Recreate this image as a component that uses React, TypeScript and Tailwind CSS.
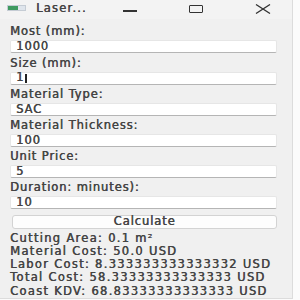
import React from 'react';

const fields = [
  { label: 'Most (mm):', value: '1000' },
  { label: 'Size (mm):', value: '1', caret: true },
  { label: 'Material Type:', value: 'SAC' },
  { label: 'Material Thickness:', value: '100' },
  { label: 'Unit Price:', value: '5' },
  { label: 'Duration: minutes):', value: '10' },
];

const results = [
  'Cutting Area: 0.1 m²',
  'Material Cost: 50.0 USD',
  'Labor Cost: 8.333333333333332 USD',
  'Total Cost: 58.33333333333333 USD',
  'Coast KDV: 68.83333333333333 USD',
];

const App = () => {
  return (
    <div className="w-[300px] h-[300px] bg-[#fbfbfb] flex overflow-hidden font-['DejaVu_Sans',sans-serif] text-[#444] [text-shadow:0.45px_0_0_#444]">
      <div className="w-[293px] h-[299px] bg-[#f0f0f0] border-r border-b border-[#dcdcdc] flex flex-col">
        {/* title bar */}
        <div className="h-[20px] flex items-center bg-[#f3f3f3] relative">
          <div className="ml-[7px] mt-[-4px] w-[19px] h-[6px] flex border border-[#c5ccd4]">
            <div className="w-[10px] bg-[#3f9a5f]" />
            <div className="flex-1 bg-[#dfe5ec]" />
          </div>
          <span className="ml-[10px] mt-[-3px] text-[11.5px] tracking-[1.2px]">Laser...</span>
          <div className="absolute left-[123px] top-[10px] w-[14px] h-[1.5px] bg-[#333]" />
          <div className="absolute left-[189px] top-[5px] w-[14px] h-[8px] border-[1.5px] border-[#333] rounded-[1px]" />
          <svg className="absolute left-[255px] top-[4px]" width="16" height="10" viewBox="0 0 16 10">
            <path d="M1 0.5 L15 9.5 M15 0.5 L1 9.5" stroke="#333" strokeWidth="1.3" fill="none" />
          </svg>
        </div>

        {/* form */}
        <div className="pl-[10px] pt-[6px] flex flex-col">
          {fields.map((f) => (
            <div key={f.label} className="flex flex-col mb-[3.2px]">
              <div className="h-[12px] leading-[12px] text-[11.5px] tracking-[0.9px]">{f.label}</div>
              <div className="mt-[3px] w-[267px] h-[13px] bg-white border border-[#e6e6e6] border-b-[#b5b5b5] rounded-[2px] flex items-center pl-[5px] text-[11.5px] tracking-[0.9px]">
                <span>{f.value}</span>
                {f.caret && <span className="ml-[1px] w-[1.5px] h-[9px] bg-[#222]" />}
              </div>
            </div>
          ))}
          <div className="mt-[2px] ml-[2px] w-[265px] h-[14px] bg-[#fdfdfd] border border-[#d3d3d3] rounded-[3px] flex items-center justify-center text-[11.5px] tracking-[0.9px]">
            Calculate
          </div>
          <div className="mt-[3px] flex flex-col">
            {results.map((r) => (
              <div key={r} className="h-[13.3px] leading-[13.3px] text-[11.5px] tracking-[1.3px] whitespace-nowrap">
                {r}
              </div>
            ))}
          </div>
        </div>
      </div>
    </div>
  );
};

export default App;
